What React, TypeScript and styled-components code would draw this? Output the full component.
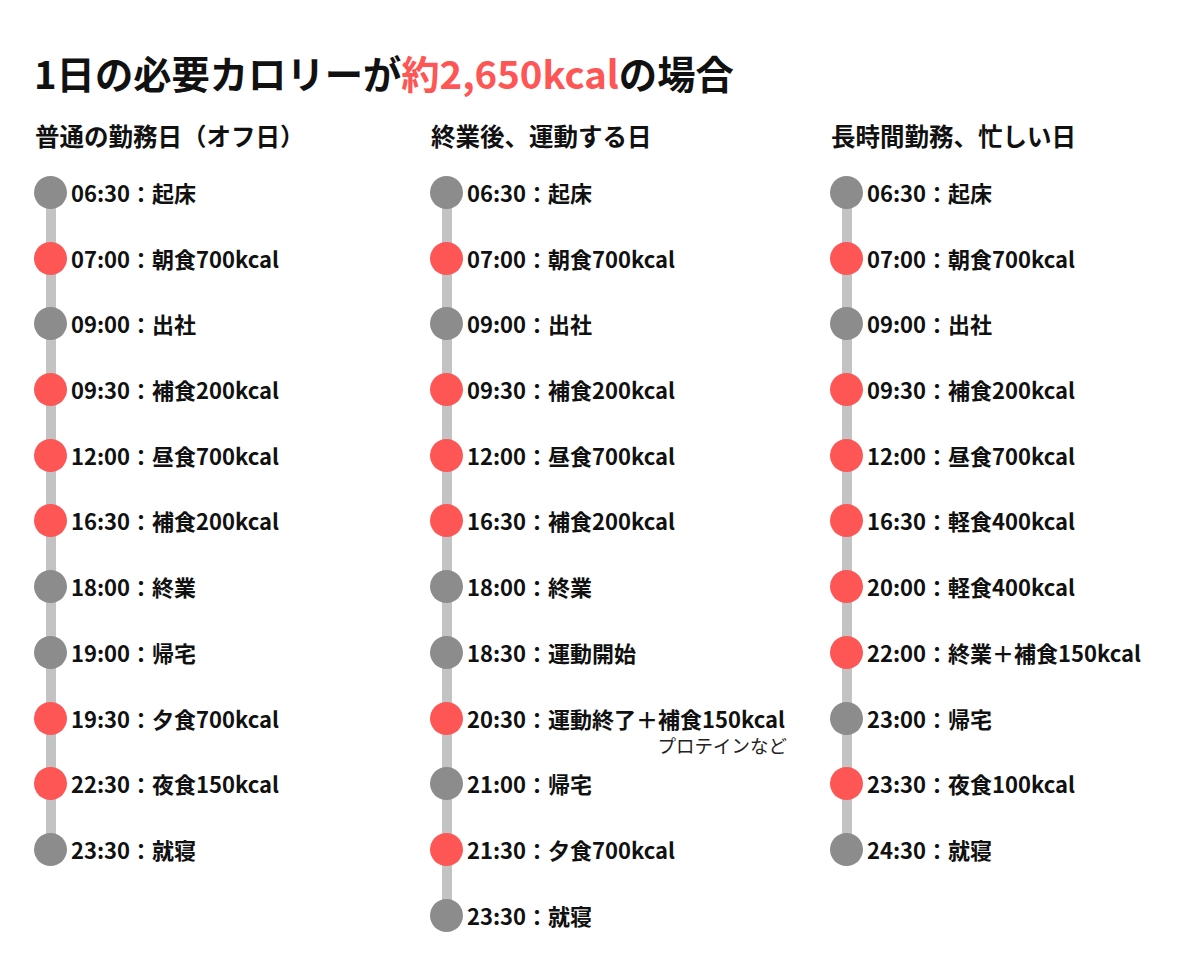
import styled, { createGlobalStyle } from 'styled-components';

type Item = {
  time: string;
  label: string;
  meal?: boolean;
  note?: string;
};

type Day = {
  title: string;
  items: Item[];
};

const days: Day[] = [
  {
    title: '普通の勤務日（オフ日）',
    items: [
      { time: '06:30', label: '起床' },
      { time: '07:00', label: '朝食700kcal', meal: true },
      { time: '09:00', label: '出社' },
      { time: '09:30', label: '補食200kcal', meal: true },
      { time: '12:00', label: '昼食700kcal', meal: true },
      { time: '16:30', label: '補食200kcal', meal: true },
      { time: '18:00', label: '終業' },
      { time: '19:00', label: '帰宅' },
      { time: '19:30', label: '夕食700kcal', meal: true },
      { time: '22:30', label: '夜食150kcal', meal: true },
      { time: '23:30', label: '就寝' },
    ],
  },
  {
    title: '終業後、運動する日',
    items: [
      { time: '06:30', label: '起床' },
      { time: '07:00', label: '朝食700kcal', meal: true },
      { time: '09:00', label: '出社' },
      { time: '09:30', label: '補食200kcal', meal: true },
      { time: '12:00', label: '昼食700kcal', meal: true },
      { time: '16:30', label: '補食200kcal', meal: true },
      { time: '18:00', label: '終業' },
      { time: '18:30', label: '運動開始' },
      { time: '20:30', label: '運動終了＋補食150kcal', meal: true, note: 'プロテインなど' },
      { time: '21:00', label: '帰宅' },
      { time: '21:30', label: '夕食700kcal', meal: true },
      { time: '23:30', label: '就寝' },
    ],
  },
  {
    title: '長時間勤務、忙しい日',
    items: [
      { time: '06:30', label: '起床' },
      { time: '07:00', label: '朝食700kcal', meal: true },
      { time: '09:00', label: '出社' },
      { time: '09:30', label: '補食200kcal', meal: true },
      { time: '12:00', label: '昼食700kcal', meal: true },
      { time: '16:30', label: '軽食400kcal', meal: true },
      { time: '20:00', label: '軽食400kcal', meal: true },
      { time: '22:00', label: '終業＋補食150kcal', meal: true },
      { time: '23:00', label: '帰宅' },
      { time: '23:30', label: '夜食100kcal', meal: true },
      { time: '24:30', label: '就寝' },
    ],
  },
];

const GlobalStyle = createGlobalStyle`
  body {
    margin: 0;
    background: #ffffff;
    font-family: "Noto Sans CJK JP", "Noto Sans", sans-serif;
    color: #111111;
  }
`;

const Page = styled.div`
  width: 1200px;
  min-height: 973px;
  box-sizing: border-box;
  padding: 48px 0 0 34px;
`;

const Title = styled.h1`
  margin: 0;
  font-size: 38.3px;
  font-weight: 700;
  line-height: 50px;
  letter-spacing: 0;

  span {
    color: #fe5555;
  }
`;

const Columns = styled.div`
  display: grid;
  grid-template-columns: 396px 400px auto;
  margin-top: 22px;
`;

const Column = styled.section`
  display: flex;
  flex-direction: column;
`;

const DayTitle = styled.h2`
  margin: 0 0 24px 1px;
  font-size: 24.5px;
  font-weight: 700;
  line-height: 32px;
`;

const Timeline = styled.ul`
  position: relative;
  margin: 0;
  padding: 0;
  list-style: none;
  display: flex;
  flex-direction: column;
  gap: 32.7px;

  &::before {
    content: '';
    position: absolute;
    left: 11.5px;
    top: 16px;
    bottom: 16px;
    width: 10px;
    background: #c3c3c3;
  }
`;

const Row = styled.li`
  position: relative;
  height: 33px;
  display: flex;
  align-items: flex-start;
  gap: 4px;
`;

const Dot = styled.span<{ $meal?: boolean }>`
  flex: none;
  width: 33px;
  height: 33px;
  border-radius: 50%;
  background: ${(p) => (p.$meal ? '#fe5555' : '#8c8c8c')};
`;

const Label = styled.div`
  display: flex;
  flex-direction: column;
  align-items: flex-end;
`;

const Text = styled.span`
  font-size: 22px;
  font-weight: 700;
  line-height: 33px;
  white-space: nowrap;
`;

const Note = styled.span`
  margin-top: 0;
  margin-right: -2px;
  font-size: 18.5px;
  font-weight: 400;
  line-height: 20px;
  color: #222222;
  white-space: nowrap;
`;

export default function App() {
  return (
    <>
      <GlobalStyle />
      <Page>
        <Title>
          1日の必要カロリーが<span>約2,650kcal</span>の場合
        </Title>
        <Columns>
          {days.map((day) => (
            <Column key={day.title}>
              <DayTitle>{day.title}</DayTitle>
              <Timeline>
                {day.items.map((item) => (
                  <Row key={item.time + item.label}>
                    <Dot $meal={item.meal} />
                    <Label>
                      <Text>
                        {item.time}：{item.label}
                      </Text>
                      {item.note && <Note>{item.note}</Note>}
                    </Label>
                  </Row>
                ))}
              </Timeline>
            </Column>
          ))}
        </Columns>
      </Page>
    </>
  );
}
